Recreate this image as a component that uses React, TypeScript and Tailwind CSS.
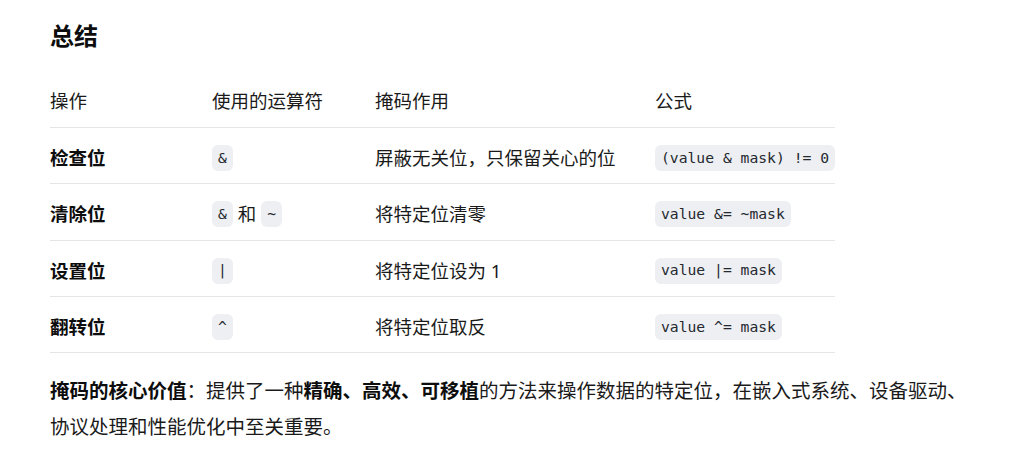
import React from 'react';

type Row = {
  op: string;
  operator: React.ReactNode;
  effect: string;
  formula: string;
};

const Code: React.FC<{ children: React.ReactNode }> = ({ children }) => (
  <code className="inline-flex h-[26px] items-center rounded-[6px] bg-[#edeff3] px-[6px] font-['DejaVu_Sans_Mono',monospace] text-[14.7px] leading-none text-[#24292f] whitespace-pre">
    {children}
  </code>
);

const rows: Row[] = [
  { op: '检查位', operator: <Code>&amp;</Code>, effect: '屏蔽无关位，只保留关心的位', formula: '(value & mask) != 0' },
  {
    op: '清除位',
    operator: (
      <span className="inline-flex items-center gap-[5px]">
        <Code>&amp;</Code>和<Code>~</Code>
      </span>
    ),
    effect: '将特定位清零',
    formula: 'value &= ~mask',
  },
  { op: '设置位', operator: <Code>|</Code>, effect: '将特定位设为 1', formula: 'value |= mask' },
  { op: '翻转位', operator: <Code>^</Code>, effect: '将特定位取反', formula: 'value ^= mask' },
];

const cols = 'grid grid-cols-[162px_163px_280px_180px]';

const App: React.FC = () => {
  return (
    <div className="min-h-[453px] bg-white pl-[50px] font-['Noto_Sans','Noto_Sans_CJK_SC',sans-serif] text-[#1a1a1a]">
      <h2 className="pt-[20px] text-[24px] font-bold leading-[32px] text-[#0d0d0d]">总结</h2>

      <div className="w-[785px] text-[18.5px] leading-[28px]">
        <div className={`${cols} border-b border-[#e6e6e6] pt-[35px] pb-[12px]`}>
          <div>操作</div>
          <div>使用的运算符</div>
          <div>掩码作用</div>
          <div>公式</div>
        </div>
        {rows.map((r) => (
          <div key={r.op} className={`${cols} items-center border-b border-[#e6e6e6] pt-[16px] pb-[11.3px]`}>
            <div className="font-bold text-[#0d0d0d]">{r.op}</div>
            <div className="flex items-center">{r.operator}</div>
            <div>{r.effect}</div>
            <div className="flex items-center">
              <Code>{r.formula}</Code>
            </div>
          </div>
        ))}
      </div>

      <p className="mt-[20px] w-[925px] text-[19.5px] leading-[35.5px]">
        <strong className="font-bold text-[#0d0d0d]">掩码的核心价值</strong>：提供了一种
        <strong className="font-bold text-[#0d0d0d]">精确、高效、可移植</strong>
        的方法来操作数据的特定位，在嵌入式系统、设备驱动、协议处理和性能优化中至关重要。
      </p>
    </div>
  );
};

export default App;
